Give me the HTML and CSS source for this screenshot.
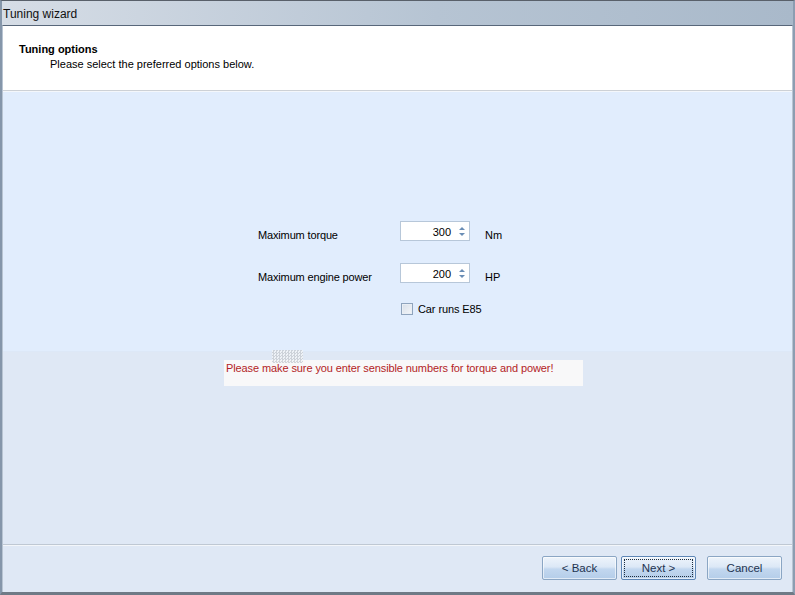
FILE: index.html
```html
<!DOCTYPE html>
<html>
<head>
<meta charset="utf-8">
<link rel="stylesheet" href="styles.css">
</head>
<body>
<div class="window">
  <div class="titlebar">Tuning wizard</div>
  <div class="client">
    <div class="header">
      <div class="h-title">Tuning options</div>
      <div class="h-sub">Please select the preferred options below.</div>
    </div>
    <div class="content">
      <div class="upper">
        <div class="form">
          <div class="row">
            <span class="label">Maximum torque</span>
            <span class="spin"><span class="val">300</span><span class="arrows"><span class="up"></span><span class="dn"></span></span></span>
            <span class="unit">Nm</span>
          </div>
          <div class="row">
            <span class="label">Maximum engine power</span>
            <span class="spin"><span class="val">200</span><span class="arrows"><span class="up"></span><span class="dn"></span></span></span>
            <span class="unit">HP</span>
          </div>
          <div class="row check-row">
            <span class="label"></span>
            <span class="check"><span class="box"></span>Car runs E85</span>
          </div>
        </div>
      </div>
      <div class="lower">
        <div class="error">
          <span class="noise"></span>
          Please make sure you enter sensible numbers for torque and power!
        </div>
      </div>
    </div>
    <div class="footer">
      <button class="btn">&lt; Back</button>
      <button class="btn focus"><span class="focusring">Next &gt;</span></button>
      <button class="btn cancel">Cancel</button>
    </div>
  </div>
</div>
</body>
</html>
```
FILE: styles.css
```css
html, body {
  margin: 0;
  padding: 0;
}
body {
  width: 795px;
  height: 595px;
  overflow: hidden;
  background: #dfe8f5;
  font-family: "Liberation Sans", Arial, sans-serif;
  font-size: 11px;
  color: #000;
}
.window {
  box-sizing: border-box;
  width: 795px;
  height: 595px;
  border-top: 1px solid #59606a;
  border-left: 2px solid #8596aa;
  border-right: 2px solid #8c9db1;
  border-bottom: 3px solid #6f7a86;
  display: flex;
  flex-direction: column;
  background: linear-gradient(to right, #d6dde6, #b6c4d3 55%, #a9b9ca);
}
.titlebar {
  height: 24px;
  line-height: 27px;
  padding-left: 1px;
  font-size: 12px;
  color: #111;
  flex: none;
}
.client {
  flex: 1;
  display: flex;
  flex-direction: column;
  border-top: 1px solid #58677a;
  border-left: 1px solid #b8c4d2;
  border-right: 1px solid #b8c4d2;
  background: #dfe8f5;
  min-height: 0;
}
.header {
  height: 65px;
  background: #fff;
  border-bottom: 1px solid #cdd1d6;
  flex: none;
  box-sizing: border-box;
  padding-top: 16px;
  padding-left: 16px;
}
.h-title {
  font-weight: bold;
  line-height: 14px;
}
.h-sub {
  padding-left: 31px;
  line-height: 16px;
}
.content {
  flex: 1;
  display: flex;
  flex-direction: column;
  border-top: 1px solid #f4f7fb;
}
.upper {
  height: 259px;
  background: #e1edfd;
  display: flex;
  flex-direction: column;
  padding-top: 129px;
  box-sizing: border-box;
  padding-left: 255px;
}
.form {
  display: flex;
  flex-direction: column;
  gap: 22px;
}
.row {
  display: flex;
  align-items: center;
  height: 20px;
}
.label {
  width: 142px;
  flex: none;
  position: relative;
  top: 4px;
  letter-spacing: -0.15px;
}
.spin {
  box-sizing: border-box;
  width: 70px;
  height: 20px;
  background: #fff;
  border: 1px solid #b7c7d9;
  display: flex;
  align-items: center;
  justify-content: flex-end;
}
.val {
  padding-right: 4px;
  padding-top: 1px;
}
.arrows {
  width: 13px;
  height: 16px;
  display: flex;
  flex-direction: column;
  align-items: center;
  justify-content: center;
  gap: 3px;
  margin-right: 1px;
}
.up, .dn {
  width: 0;
  height: 0;
  border-left: 3px solid transparent;
  border-right: 3px solid transparent;
}
.up {
  border-bottom: 3px solid #6a8db5;
}
.dn {
  border-top: 3px solid #6a8db5;
}
.unit {
  margin-left: 15px;
  position: relative;
  top: 4px;
}
.check-row {
  margin-top: -6px;
}
.check {
  display: flex;
  align-items: center;
  gap: 5px;
  margin-left: 1px;
  letter-spacing: -0.1px;
}
.box {
  box-sizing: border-box;
  width: 12px;
  height: 12px;
  border: 1px solid #8fa4bd;
  background: linear-gradient(135deg, #d7dfe9, #f4f6f9);
  box-shadow: inset 0 0 0 1px #e9eef4;
}
.lower {
  flex: 1;
  background: #dfe8f5;
  position: relative;
  padding-top: 8px;
  padding-left: 221px;
  border-top: 1px solid #dde8f7;
}
.error {
  position: relative;
  box-sizing: border-box;
  width: 359px;
  height: 26px;
  background: #f8f8f9;
  color: #b31d26;
  padding: 1px 0 0 2px;
  line-height: 14px;
  letter-spacing: -0.1px;
}
.noise {
  position: absolute;
  left: 48px;
  top: -10px;
  width: 31px;
  height: 13px;
  background-image: repeating-conic-gradient(#c8ccd2 0 25%, #f2f4f7 0 50%);
  background-size: 3px 3px;
  opacity: 0.8;
}
.footer {
  height: 48px;
  flex: none;
  border-top: 1px solid #bfc8d3;
  box-shadow: inset 0 1px 0 #f3f6fa;
  display: flex;
  align-items: flex-start;
  justify-content: flex-end;
  padding-top: 11px;
  padding-right: 10px;
  box-sizing: border-box;
  gap: 4px;
  background: #dfe8f5;
}
.btn {
  width: 75px;
  height: 24px;
  box-sizing: border-box;
  border: 1px solid #8ba6c4;
  border-radius: 2px;
  background: linear-gradient(to bottom, #eef4fb 0%, #dce8f6 45%, #c2d7ef 55%, #b4cde9 100%);
  box-shadow: inset 0 0 0 1px rgba(255,255,255,0.6);
  font-family: "Liberation Sans", Arial, sans-serif;
  font-size: 11.5px;
  color: #1e3350;
  padding: 0;
  display: flex;
  align-items: center;
  justify-content: center;
}
.btn.focus {
  border-color: #5e86b6;
  padding: 2px;
}
.focusring {
  flex: 1;
  align-self: stretch;
  border: 1px dotted #1d2b3d;
  display: flex;
  align-items: center;
  justify-content: center;
}
.btn.cancel {
  margin-left: 7px;
}
```
